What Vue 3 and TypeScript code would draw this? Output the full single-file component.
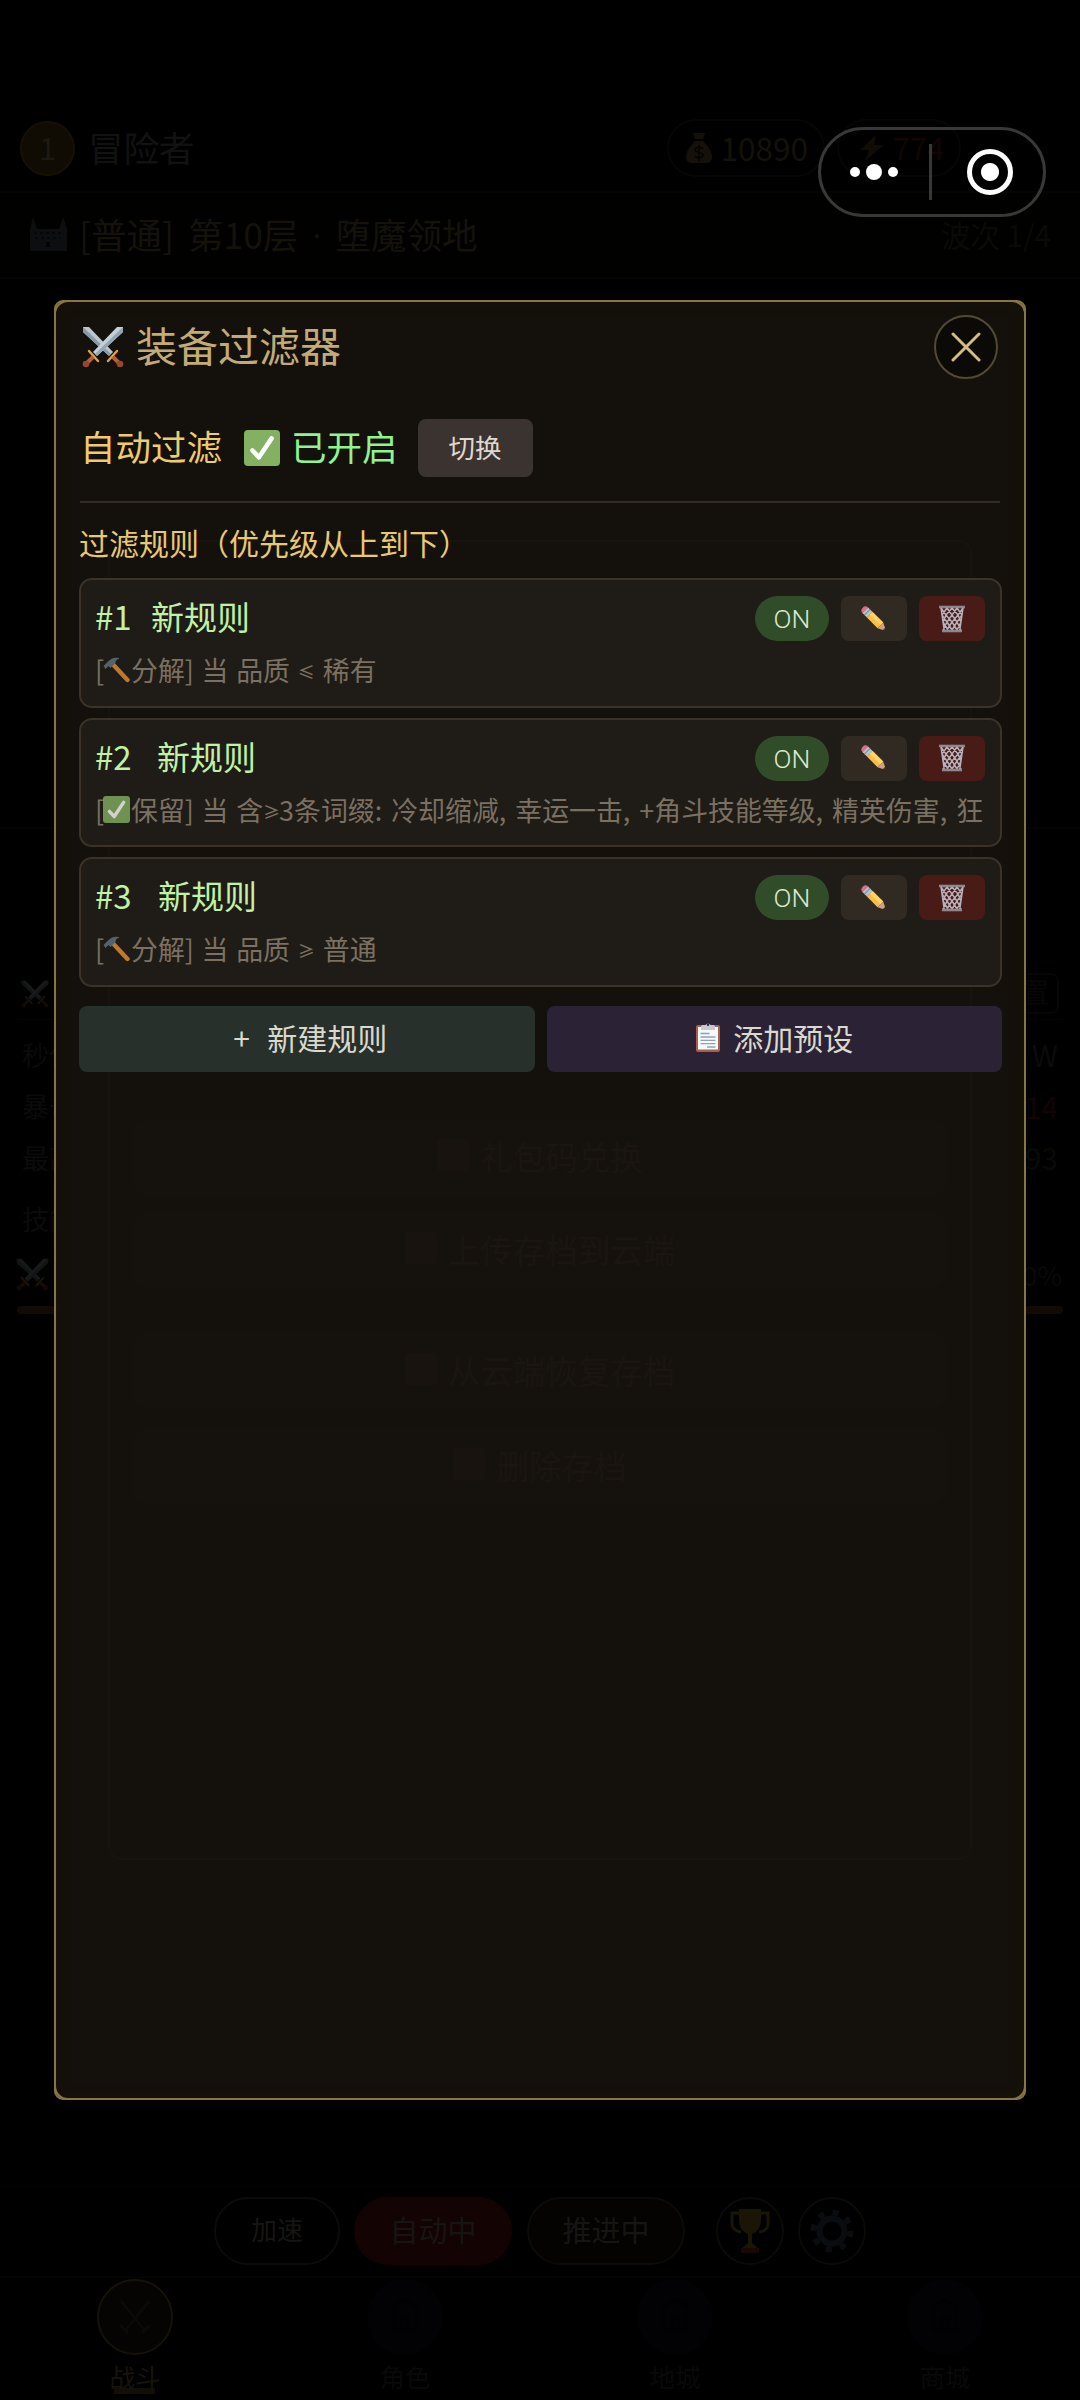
<script setup lang="ts">
interface Rule {
  id: number
  name: string
  labelWidth: number
  action: 'salvage' | 'keep'
  actionText: string
  subject: string
  compare: string
  target: string
}

const rules: Rule[] = [
  { id: 1, name: '新规则', labelWidth: 56, action: 'salvage', actionText: '分解', subject: '当 品质 ', compare: '≤', target: ' 稀有' },
  { id: 2, name: '新规则', labelWidth: 62, action: 'keep', actionText: '保留', subject: '当 含', compare: '≥', target: '3条词缀: 冷却缩减, 幸运一击, +角斗技能等级, 精英伤害, 狂' },
  { id: 3, name: '新规则', labelWidth: 63, action: 'salvage', actionText: '分解', subject: '当 品质 ', compare: '≥', target: ' 普通' },
]

const stats = [
  { label: '秒伤', value: 'W', tone: 'plain' },
  { label: '暴击', value: '14', tone: 'red' },
  { label: '最高', value: '93', tone: 'green' },
]

const tabs = ['战斗', '角色', '地城', '商城']
</script>

<template>
  <div class="screen">
    <svg width="0" height="0" class="defs">
      <symbol id="swords" viewBox="0 0 42 42">
        <path d="M1 1h6l24 25-4 4L1 6z" fill="#b9c6d0" />
        <path d="M1 6l26 24 2-2L1 1z" fill="#8799a6" />
        <path d="M41 1h-6L11 26l4 4L41 6z" fill="#c4d0d8" />
        <path d="M41 6L15 30l-2-2L41 1z" fill="#93a5b1" />
        <path d="M7 25l9 10M35 25l-9 10" stroke="#e3a243" stroke-width="2.4" stroke-linecap="round" />
        <path d="M11 31l-7 7M31 31l7 7" stroke="#b0603a" stroke-width="4" />
        <circle cx="4" cy="38" r="3.3" fill="#93492e" /><circle cx="38" cy="38" r="3.3" fill="#93492e" />
      </symbol>
      <symbol id="check" viewBox="0 0 36 36">
        <rect width="36" height="36" rx="4" fill="#84b062" />
        <path d="M8.5 20.5l6.5 6.8L27.5 8.5" fill="none" stroke="#fff" stroke-width="4.6" stroke-linecap="round" stroke-linejoin="round" />
      </symbol>
      <symbol id="hammer" viewBox="0 0 26 26">
        <path d="M10 8l14 15" stroke="#bd7a2c" stroke-width="4.4" stroke-linecap="round" />
        <path d="M0 9l5-5C8 1 11 0 15 1l1 1c-3 0-4 2-4 4l-5 5-2-2-3 3z" fill="#54626b" />
      </symbol>
      <symbol id="pencil" viewBox="0 0 26 26">
        <g transform="rotate(45 13 13)">
          <path d="M-3 13a4 4 0 0 1 4-4h1v8H1a4 4 0 0 1-4-4z" fill="#d3708a" />
          <path d="M1 9h6v8H1z" fill="#b9c4cb" /><path d="M3.4 9v8" stroke="#7b8890" />
          <path d="M7 9h15v8H7z" fill="#f5bf45" /><path d="M7 9h15v4H7z" fill="#ffd364" />
          <path d="M22 9l5 2.4q2 1.6 0 3.2L22 17z" fill="#d0a27c" />
          <path d="M27 11.6l1.8 1.4-1.8 1.4z" fill="#4b3a35" />
        </g>
      </symbol>
      <symbol id="basket" viewBox="0 0 28 28">
        <path d="M1 2h26" stroke="#8c878d" stroke-width="2.6" />
        <path d="M3 3l3.2 22M25 3l-3.2 22M3 3l5 7-3 7 5 8M9 3L4 10l5 7-4 8M9 3l5 7-5 7 5 8M14 3L8 10l6 7-5 8M14 3l6 7-6 7 5 8M19 3l-5 7 5 7-5 8M19 3l5 7-5 7 4 8M25 3l-5 7 3 7-4 8" fill="none" stroke="#b7b0bb" stroke-width="1.500" />
        <path d="M4 26h20" stroke="#8c878d" stroke-width="2.6" />
      </symbol>
      <symbol id="clipboard" viewBox="0 0 24 30">
        <rect x="0" y="3" width="24" height="27" rx="2" fill="#a8604b" />
        <rect x="2" y="5" width="20" height="22.5" fill="#f6f8fa" />
        <path d="M5 8V4.500q0-1.500 2-1.500h2.500a2.800 2.800 0 0 1 5 0H17q2 0 2 1.500V8z" fill="#c5cad4" />
        <circle cx="12" cy="2.800" r="1.200" fill="#2c2336" />
        <path d="M4.500 11.500h9M4.500 15h15M4.500 18.300h15M4.500 21.600h15M11 25h8.500" stroke="#8fa3b3" stroke-width="1.300" />
      </symbol>
    </svg>

    <header class="top">
      <span class="level">1</span>
      <span class="player">冒险者</span>
      <div class="pill coins">
        <svg width="26" height="30" viewBox="0 0 26 30"><path d="M7 0h12l-2 6H9zM9 8h8c5 5 9 11 9 16 0 4-3 6-6 6H6c-3 0-6-2-6-6C0 19 4 13 9 8z" fill="#15110a" /><path d="M17 16c-2-3-8-2-8 1s8 2 8 5-6 4-8 1M13 12v16" fill="none" stroke="#050402" stroke-width="1.500" /></svg>
        <span>10890</span>
      </div>
      <div class="pill power">
        <svg width="26" height="26" viewBox="0 0 26 26"><path d="M17 0L1 15h9L6 26 25 10H15z" fill="#120d03" /></svg>
        <span>774</span>
      </div>
    </header>

    <div class="stage">
      <svg width="38" height="34" viewBox="0 0 38 34"><path d="M1 34V12L4 0l4 12h22l4-12 4 12v22z" fill="#0c0e10" /><path d="M5 16h28M6 21h26" stroke="#060708" stroke-dasharray="3 3" stroke-width="2" /><path d="M17 30v-5h4v5z" fill="#030303" /></svg>
      <span class="stage-name">[普通] 第10层 <span class="mid">·</span> 堕魔领地</span>
      <span class="wave">波次 1/4</span>
    </div>

    <div class="arena"></div>

    <section class="panel">
      <div class="panel-head">
        <svg class="dim" width="28" height="28"><use href="#swords" /></svg>
        <span class="reset">重置</span>
      </div>
      <div v-for="s in stats" :key="s.label" class="stat">
        <span>{{ s.label }}</span><span class="value" :class="s.tone">{{ s.value }}</span>
      </div>
      <div class="skills">技能</div>
      <div class="skill-row">
        <svg class="dim" width="33" height="33"><use href="#swords" /></svg><span>0%</span>
      </div>
      <div class="bar"></div>
    </section>

    <div class="controls">
      <span class="ctl small">加速</span>
      <span class="ctl auto">自动中</span>
      <span class="ctl push">推进中</span>
      <span class="round trophy">
        <svg width="42" height="44" viewBox="0 0 42 44"><path d="M10 0h22v10q0 12-9 15v9l7 6v4H12v-4l7-6v-9Q10 22 10 10z" fill="#1a1505" /><path d="M10 4H3v10q0 8 9 9M32 4h7v10q0 8-9 9" fill="none" stroke="#1a1505" stroke-width="3" /><path d="M12 39h18v5H12z" fill="#180704" /></svg>
      </span>
      <span class="round">
        <svg width="44" height="44" viewBox="0 0 44 44"><circle cx="22" cy="22" r="12.500" fill="none" stroke="#0a0d10" stroke-width="6" /><circle cx="22" cy="22" r="18.500" fill="none" stroke="#0a0d10" stroke-width="6" stroke-dasharray="6 8.530" /></svg>
      </span>
    </div>

    <nav class="tabs">
      <div v-for="(t, i) in tabs" :key="t" class="tab" :class="{ active: i === 0 }">
        <span class="tab-icon">
          <svg v-if="i === 0" width="40" height="40" viewBox="0 0 40 40"><path d="M6 4l24 30M34 4L10 34M5 28l8 8M35 28l-8 8" stroke="#0f0808" stroke-width="2.500" /></svg>
          <svg v-else width="34" height="38" viewBox="0 0 34 38"><path d="M6 8l11-6 11 6v24H6zM14 32V20h6v12" fill="none" stroke="#010103" stroke-width="3" /></svg>
        </span>
        <span class="tab-text">{{ t }}</span>
      </div>
    </nav>

    <div class="overlay">
      <section class="dialog">
        <div class="under">
          <div class="under-btn gift"><i></i>礼包码兑换</div>
          <div class="under-btn upload"><i></i>上传存档到云端</div>
          <div class="under-btn restore"><i></i>从云端恢复存档</div>
          <div class="under-btn remove"><i></i>删除存档</div>
        </div>
        <div class="dialog-head">
          <svg width="42" height="42"><use href="#swords" /></svg>
          <h1>装备过滤器</h1>
          <button class="close" aria-label="关闭">
            <svg width="30" height="30" viewBox="0 0 30 30"><path d="M2 2l26 26M28 2L2 28" stroke="#d3bd7f" stroke-width="3" stroke-linecap="round" /></svg>
          </button>
        </div>
        <div class="auto-row">
          <span class="auto-label">自动过滤</span>
          <svg width="36" height="36"><use href="#check" /></svg>
          <span class="auto-state">已开启</span>
          <button class="toggle">切换</button>
        </div>
        <h2>过滤规则（优先级从上到下）</h2>
        <div class="rules">
          <article v-for="r in rules" :key="r.id" class="rule">
            <div class="rule-head">
              <span class="rule-id" :style="{ width: r.labelWidth + 'px' }">#{{ r.id }}</span>
              <span class="rule-name">{{ r.name }}</span>
              <button class="on">ON</button>
              <button class="edit" aria-label="编辑"><svg width="26" height="26"><use href="#pencil" /></svg></button>
              <button class="del" aria-label="删除"><svg width="28" height="28"><use href="#basket" /></svg></button>
            </div>
            <div class="rule-desc">
              <span class="bracket">[</span>
              <svg v-if="r.action === 'salvage'" width="27" height="26"><use href="#hammer" /></svg>
              <svg v-else class="keep" width="27" height="27"><use href="#check" /></svg>
              <span class="desc-text">{{ r.actionText }}] {{ r.subject }}<span class="compare">{{ r.compare }}</span><span class="desc-target">{{ r.target }}</span></span>
            </div>
          </article>
        </div>
        <div class="actions">
          <button class="create"><span class="plus">+</span>新建规则</button>
          <button class="preset"><svg width="24" height="30"><use href="#clipboard" /></svg>添加预设</button>
        </div>
      </section>
    </div>

    <div class="capsule">
      <i class="dot"></i><i class="dot big"></i><i class="dot"></i>
      <i class="sep"></i>
      <i class="target"></i>
    </div>
  </div>
</template>

<style>
body { background: #000; }
</style>

<style scoped>
* { box-sizing: border-box; }
.screen { position: relative; width: 1080px; height: 2400px; overflow: hidden; display: flex; flex-direction: column; background: #000; color: #121212; font-family: "Noto Sans CJK SC", sans-serif; font-weight: 400; white-space: nowrap; }
.defs { position: absolute; }
svg { flex: none; display: block; }
button { border: 0; padding: 0; font: inherit; display: flex; align-items: center; justify-content: center; }

.top { height: 193px; padding: 105px 0 0 20px; display: flex; align-items: center; border-bottom: 2px solid #040402; }
.level { width: 55px; height: 55px; border-radius: 50%; background: #100b03; border: 2px solid #171005; color: #1c1913; font-size: 31px; line-height: 47px; text-align: center; }
.player { margin-left: 13px; padding-bottom: 3px; font-size: 35.500px; }
.pill { height: 58px; border: 2px solid #060604; border-radius: 29px; display: flex; align-items: center; font-size: 31px; }
.pill span { padding-bottom: 3px; }
.coins { width: 158px; margin-left: 472px; padding-left: 17px; gap: 9px; font-size: 31.500px; color: #151207; }
.power { width: 124px; margin-left: 12px; padding-left: 20px; gap: 8px; color: #120504; }
.stage { height: 86px; padding: 0 29px 2px 29px; display: flex; align-items: center; border-bottom: 2px solid #050402; background: #010100; }
.stage-name { margin-left: 12px; padding-bottom: 2px; font-size: 35.500px; word-spacing: 6px; color: #15120a; }
.mid { font-family: Roboto, sans-serif; }
.wave { margin-left: auto; font-size: 29.500px; color: #0a0a0a; }
.arena { height: 550px; border-bottom: 2px solid #050505; }

.panel { height: 1357px; padding: 144px 17px 0; font-size: 27px; color: #0b0b0b; }
.panel-head { height: 47px; display: flex; align-items: flex-start; justify-content: space-between; padding: 7px 4px 0; border-bottom: 1px solid #050505; }
.dim { opacity: .12; }
.reset { height: 41px; margin-top: -7px; padding: 0 8px; line-height: 34px; border: 2px solid #090505; border-radius: 8px; color: #0b0606; }
.stat { height: 51.500px; display: flex; align-items: center; justify-content: space-between; padding: 17px 5px 0; }
.value { font-size: 30px; }
.red { color: #120404; }
.green { color: #050c05; }
.skills { height: 72px; padding: 24px 5px 0; line-height: 40px; }
.skill-row { display: flex; align-items: center; justify-content: space-between; height: 48px; margin: 4px 1px 0 -1px; color: #090909; }
.bar { height: 8px; margin-top: 7px; border-radius: 4px; background: #120a05; }

.controls { height: 92px; padding: 10px 0 0 214px; display: flex; align-items: flex-start; border-top: 1px solid #040404; border-bottom: 2px solid #040404; }
.ctl { height: 68px; border: 2px solid #0b0b08; border-radius: 34px; text-align: center; font-size: 29px; line-height: 60px; color: #171514; }
.small { width: 126px; font-size: 26px; }
.auto { width: 158px; margin: 0 15px 0 14px; background: #130303; border-color: #140303; }
.push { width: 158px; background: #040302; }
.round { width: 68px; height: 68px; margin-left: 14px; border: 2px solid #0b0a07; border-radius: 50%; display: flex; align-items: center; justify-content: center; }
.trophy { margin-left: 31px; }

.tabs { flex: 1; display: flex; }
.tab { flex: 1; display: flex; flex-direction: column; align-items: center; color: #090909; }
.tab-icon { width: 76px; height: 76px; margin-top: 1px; border-radius: 50%; background: #020205; display: flex; align-items: center; justify-content: center; }
.tab-text { margin-top: 3px; height: 37px; font-size: 25.500px; line-height: 35px; }
.active { color: #17140a; }
.active .tab-icon { background: #060402; border: 2px solid #15120a; }
.active .tab-text { background: linear-gradient(#120f07, #120f07) center 30px / 41px 6px no-repeat; }

.overlay { position: absolute; inset: 0; display: flex; align-items: center; justify-content: center; }
.dialog { position: relative; width: 972px; height: 1800px; padding: 13px 22px 0 23px; border: 2px solid #887744; border-radius: 9px; background: #14100b; box-shadow: inset 0 0 14px #19130a; }
.dialog::after { content: ""; position: absolute; inset: -2px; border: 2px solid #887744; border-radius: 14px; pointer-events: none; }
.under { position: absolute; left: 52px; top: 238px; width: 864px; height: 1320px; padding: 580px 24px 0; border: 2px solid #17130e; border-radius: 14px; }
.under-btn { display: flex; align-items: center; justify-content: center; gap: 11px; height: 74px; padding-bottom: 4px; border-radius: 10px; background: #15120d; color: #1a1510; font-size: 32.500px; }
.under-btn i { width: 32px; height: 32px; border-radius: 4px; background: #18130f; }
.gift { margin-top: -2px; }
.upload { margin-top: 19px; }
.restore { margin-top: 47px; }
.remove { margin-top: 21px; }

.dialog-head { position: relative; height: 64px; padding: 0 4px 0 3px; display: flex; align-items: center; }
h1 { margin: 0 0 0 12px; padding-bottom: 6px; font-size: 41px; font-weight: 400; line-height: 58px; color: #c2ab76; }
.close { width: 64px; height: 64px; margin-left: auto; border-radius: 50%; border: 2px solid #544936; background: #0b0a07; }
.auto-row { position: relative; margin: 40px 2px 0 1px; height: 84px; padding: 0 0 24px; display: flex; align-items: center; border-bottom: 2px solid #332c26; }
.auto-label { padding-bottom: 4px; font-size: 35.500px; color: #efcb6c; line-height: 50px; }
.auto-row svg { margin-left: 22px; }
.auto-state { margin-left: 11px; padding-bottom: 4px; font-size: 35.500px; line-height: 50px; color: #8ef58c; }
.toggle { width: 115px; height: 58px; margin-left: 20px; padding-bottom: 3px; border-radius: 8px; background: #3b3330; color: #e0d7ce; font-size: 26.500px; }
h2 { position: relative; margin: 22px 0 19px; font-size: 30px; font-weight: 400; line-height: 34px; color: #e8c971; }
.rules { position: relative; display: flex; flex-direction: column; gap: 10px; }
.rule { height: 129.500px; padding: 16px 15px 0 14px; border: 2px solid #3b3328; border-radius: 13px; background: #1f1b16; }
.rule-head { height: 45px; display: flex; align-items: center; }
.rule-id, .rule-name { padding-bottom: 4px; font-size: 33px; line-height: 41px; color: #c0f2a5; }
.rule-name { margin-right: auto; }
.on { width: 74px; height: 45px; border-radius: 23px; background: #314c29; color: #dce8cc; font-family: Roboto, sans-serif; font-size: 26.500px; font-weight: 300; }
.edit, .del { width: 66px; height: 45px; margin-left: 12px; border-radius: 8px; background: #302a23; }
.del { background: #491b16; }
.rule-desc { margin-top: 8px; height: 42px; display: flex; align-items: center; font-size: 26.900px; line-height: 42px; color: #7b7061; word-spacing: 1.700px; }
.bracket { width: 8px; }
.rule-desc svg { margin-right: 1px; }
.compare { display: inline-block; width: 16px; font-size: 17px; font-weight: 500; vertical-align: 2px; line-height: 20px; }
.desc-target { word-spacing: 3px; }
.keep { opacity: .8; }
.actions { position: relative; display: flex; justify-content: space-between; margin-top: 19.500px; }
.actions button { width: 455.500px; height: 66px; padding-bottom: 4px; border-radius: 8px; font-size: 30px; color: #dbd8cd; }
.create { background: #27302a; }
.plus { width: 41px; padding-left: 7px; text-align: left; }
.actions .preset { background: #2b2335; gap: 13px; padding-left: 1px; }

.capsule { position: absolute; left: 818px; top: 127px; width: 228px; height: 90px; padding-left: 29px; display: flex; align-items: center; border: 3px solid #383838; border-radius: 45px; }
.dot { width: 10px; height: 10px; border-radius: 50%; background: #fff; }
.big { width: 16px; height: 16px; margin: 0 6px; }
.sep { width: 3px; height: 56px; margin-left: 31px; background: #383838; }
.target { width: 46px; height: 46px; margin-left: 35px; border: 5px solid #fff; border-radius: 50%; background: radial-gradient(circle, #fff 8.500px, transparent 9.500px); }
</style>
